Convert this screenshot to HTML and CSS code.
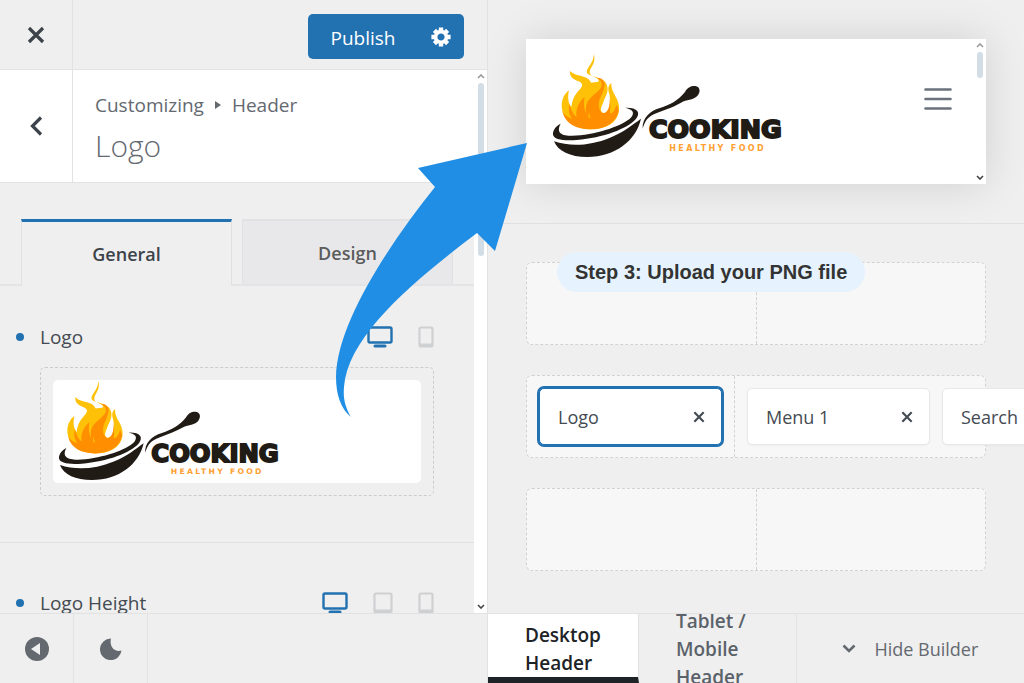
FILE: index.html
```html
<!DOCTYPE html>
<html lang="en">
<head>
    <meta charset="UTF-8">
    <meta name="viewport" content="width=device-width, initial-scale=1.0">
    <title>Customize: Header Logo</title>
    <link rel="stylesheet" href="styles.css">
</head>
<body>
    <svg class="sprite" aria-hidden="true">
        <symbol id="logo" viewBox="0 12 720 312">
            <path fill="#ffc107" d="M132 12C130 45 107 52 111 69C118 80 145 78 163 93C178 110 174 126 164 146C155 165 152 182 160 188C176 182 184 160 178 132C173 118 174 106 184 99C182 128 204 140 207 168C211 208 180 238 122 238C70 238 35 208 35 166C36 146 44 130 57 121C52 145 55 158 64 172C67 146 76 132 90 118C100 106 98 98 84 93C70 88 58 80 60 62C76 82 114 72 123 98C125 110 117 120 118 130C124 118 148 104 146 90C142 80 118 80 119 67C119 52 139 42 132 12Z"/>
            <path fill="#ffc107" d="M90 118L122 98L163 93L160 190L120 225L64 172Z"/>
            <path fill="#ff8f00" d="M38 187C46 222 80 238 122 238C170 238 200 214 206 182C204 174 202 168 199 165C195 180 188 192 180 190C182 170 182 155 177 146C180 175 171 188 158 189C144 180 142 158 156 132C162 120 164 108 160 98C160 116 142 128 128 144C116 160 114 188 122 206C106 196 98 168 104 140C84 158 76 180 80 201C72 196 64 184 59 162C54 178 57 194 66 206C54 202 44 196 38 187Z"/>
            <path fill="#ff8f00" d="M140 84C152 90 158 98 154 110C148 124 124 136 112 156C106 172 106 190 114 202C120 180 120 160 140 140C160 120 174 104 156 88C152 84 146 83 140 84Z"/>
            <path fill="#fff" d="M164 148C156 168 145 184 161 189C174 187 181 168 178 145C174 160 168 160 164 148Z"/>
            <path fill="#211b15" d="M32 221C16 229 8 242 9 254C12 268 38 273 80 270C160 264 232 236 257 208C274 187 262 172 226 173C246 178 254 185 246 199C230 222 160 248 92 256C44 261 14 254 32 221Z"/>
            <path fill="#211b15" d="M12 274C60 290 120 288 180 263C222 246 246 225 273 206C258 272 196 320 112 321C60 321 24 304 12 274Z"/>
            <path fill="#211b15" d="M278 236C276 206 298 183 330 174C360 165 386 150 405 126C412 112 424 107 436 108C451 110 453 127 441 139C428 151 411 148 393 158C366 174 338 181 313 192C291 202 285 214 278 236Z"/>
            <text class="logo-name" x="297" y="264">COOKING</text>
            <text class="logo-tagline" x="358" y="303">HEALTHY FOOD</text>
        </symbol>
        <symbol id="desktop" viewBox="0 0 26 22">
            <rect x="1.5" y="1.5" width="23" height="15" rx="1.5" fill="none" stroke="currentColor" stroke-width="2.4"/>
            <path d="M8 20H18" stroke="currentColor" stroke-width="3" stroke-linecap="round"/>
        </symbol>
        <symbol id="tablet" viewBox="0 0 20 22">
            <rect x="1.5" y="1.5" width="17" height="19" rx="1.5" fill="none" stroke="currentColor" stroke-width="2.2"/>
            <path d="M2 19H18" stroke="currentColor" stroke-width="3"/>
        </symbol>
        <symbol id="phone" viewBox="0 0 16 22">
            <rect x="1.5" y="1.5" width="13" height="19" rx="1.5" fill="none" stroke="currentColor" stroke-width="2.2"/>
            <path d="M2 19H14" stroke="currentColor" stroke-width="3"/>
        </symbol>
        <symbol id="cross" viewBox="0 0 18 18">
            <path d="M2 2L16 16M16 2L2 16" stroke="currentColor" stroke-width="3.2"/>
        </symbol>
        <symbol id="caret" viewBox="0 0 8 5">
            <path d="M1 4L4 1L7 4" fill="none" stroke="currentColor" stroke-width="1.6"/>
        </symbol>
    </svg>

    <div class="customizer">
        <aside class="sidebar">
            <header class="sidebar-header">
                <button class="close-btn" aria-label="Close"><svg width="18" height="18"><use href="#cross"/></svg></button>
                <div class="publish">
                    <button class="publish-btn">Publish</button>
                    <button class="settings-btn" aria-label="Publish settings">
                        <svg width="20" height="20" viewBox="-10 -10 20 20">
                            <g stroke="#fff" stroke-width="4.4">
                                <path d="M0 -9.6V-5M0 9.6V5M-9.6 0H-5M9.6 0H5"/>
                                <path d="M-6.6 -6.6L-4 -4M6.6 -6.6L4 -4M-6.6 6.6L-4 4M6.6 6.6L4 4"/>
                            </g>
                            <circle r="5.4" fill="none" stroke="#fff" stroke-width="3.6"/>
                        </svg>
                    </button>
                </div>
            </header>

            <div class="sidebar-body">
                <div class="panel">
                    <div class="panel-title">
                        <button class="back-btn" aria-label="Back">
                            <svg width="14" height="20" viewBox="0 0 14 20"><path d="M12 1.5L3.5 10L12 18.5" fill="none" stroke="currentColor" stroke-width="3.2"/></svg>
                        </button>
                        <div class="title-text">
                            <div class="crumbs">Customizing <svg width="6" height="8" viewBox="0 0 6 8"><path d="M0 0L6 4L0 8Z" fill="currentColor"/></svg> Header</div>
                            <h1>Logo</h1>
                        </div>
                    </div>

                    <div class="tabs">
                        <button class="tab active">General</button>
                        <button class="tab">Design</button>
                    </div>

                    <section class="control">
                        <div class="control-head">
                            <span class="dot"></span>
                            <h2>Logo</h2>
                            <div class="devices">
                                <button class="device active" aria-label="Desktop"><svg width="26" height="22"><use href="#desktop"/></svg></button>
                                <button class="device" aria-label="Mobile"><svg width="16" height="22"><use href="#phone"/></svg></button>
                            </div>
                        </div>
                        <div class="upload">
                            <div class="upload-image"><svg class="logo-small" role="img" aria-label="Cooking Healthy Food"><use href="#logo"/></svg></div>
                        </div>
                    </section>

                    <section class="control">
                        <div class="control-head">
                            <span class="dot"></span>
                            <h2>Logo Height</h2>
                            <div class="devices">
                                <button class="device active" aria-label="Desktop"><svg width="26" height="22"><use href="#desktop"/></svg></button>
                                <button class="device" aria-label="Tablet"><svg width="20" height="22"><use href="#tablet"/></svg></button>
                                <button class="device" aria-label="Mobile"><svg width="16" height="22"><use href="#phone"/></svg></button>
                            </div>
                        </div>
                    </section>
                </div>
                <div class="scrollbar">
                    <svg class="up" width="8" height="5"><use href="#caret"/></svg>
                    <span class="thumb"></span>
                    <svg class="down" width="8" height="5"><use href="#caret"/></svg>
                </div>
            </div>

            <footer class="sidebar-footer">
                <button class="footer-btn" aria-label="Hide controls">
                    <svg width="24" height="24" viewBox="0 0 24 24"><circle cx="12" cy="12" r="12" fill="currentColor"/><path d="M6 12L15 6V18Z" fill="#efefef"/></svg>
                </button>
                <button class="footer-btn" aria-label="Dark mode">
                    <svg width="22" height="22" viewBox="0 0 22 22"><path d="M11 0.5A10.8 10.8 0 1 0 21.5 12.5C15 14.5 9 9 11 0.5Z" fill="currentColor"/></svg>
                </button>
            </footer>
        </aside>

        <main class="main">
            <div class="preview-area">
                <div class="preview">
                    <svg class="logo-large" role="img" aria-label="Cooking Healthy Food"><use href="#logo"/></svg>
                    <button class="menu-btn" aria-label="Menu">
                        <svg width="28" height="24" viewBox="0 0 28 24"><path d="M1.5 2.5H26.5M1.5 12H26.5M1.5 21.5H26.5" stroke="currentColor" stroke-width="2.6" stroke-linecap="round"/></svg>
                    </button>
                    <div class="scrollbar">
                        <svg class="up" width="8" height="5"><use href="#caret"/></svg>
                        <span class="thumb"></span>
                        <svg class="down" width="8" height="5"><use href="#caret"/></svg>
                    </div>
                </div>
            </div>

            <div class="builder">
                <div class="step">Step 3: Upload your PNG file</div>
                <div class="row">
                    <div class="cell"></div>
                    <div class="cell"></div>
                </div>
                <div class="row">
                    <div class="cell fit">
                        <div class="item selected">Logo <button class="remove" aria-label="Remove Logo"><svg width="12" height="12"><use href="#cross"/></svg></button></div>
                    </div>
                    <div class="cell">
                        <div class="item">Menu 1 <button class="remove" aria-label="Remove Menu 1"><svg width="12" height="12"><use href="#cross"/></svg></button></div>
                        <div class="item">Search</div>
                    </div>
                </div>
                <div class="row">
                    <div class="cell"></div>
                    <div class="cell"></div>
                </div>
            </div>

            <footer class="builder-footer">
                <button class="view-tab active">Desktop<br>Header</button>
                <button class="view-tab">Tablet /<br>Mobile<br>Header</button>
                <button class="hide-btn">
                    <svg width="14" height="10" viewBox="0 0 14 10"><path d="M1.5 1.5L7 7L12.5 1.5" fill="none" stroke="currentColor" stroke-width="2.6"/></svg>
                    Hide Builder
                </button>
            </footer>
        </main>

        <svg class="arrow" width="192" height="275" viewBox="336 143 192 275" aria-hidden="true">
            <path fill="#208ee4" d="M527 143L418 168L435 187C395 237 337 320 336 377C336 395 341 409 351 417C345 407 343 398 344 387C348 335 415 280 477 233L495 251Z"/>
        </svg>
    </div>
</body>
</html>
```
FILE: styles.css
```css
* { box-sizing: border-box; }
body { margin: 0; font-family: 'Open Sans', 'Noto Sans', sans-serif; font-size: 18px; line-height: 28px; color: #444b52; background: #efefef; }
h1, h2 { margin: 0; font-weight: 400; }
button { font: inherit; color: inherit; background: none; border: none; padding: 0; cursor: pointer; }
svg { display: block; flex-shrink: 0; }
.sprite { position: absolute; width: 0; height: 0; }

.customizer { position: relative; display: grid; grid-template-columns: 488px 1fr; height: 100vh; overflow: hidden; }

/* sidebar */
.sidebar { display: flex; flex-direction: column; min-height: 0; border-right: 1px solid #e2e2e3; }
.sidebar-header { display: flex; justify-content: space-between; align-items: center; height: 70px; padding-right: 23px; border-bottom: 1px solid #e2e2e3; }
.close-btn { display: flex; align-items: center; justify-content: center; align-self: stretch; width: 73px; border-right: 1px solid #e2e2e3; color: #3c434a; }
.publish { display: flex; height: 45px; margin-top: 4px; background: #2271b1; border-radius: 5px; color: #fff; }
.publish-btn { width: 110px; padding-top: 2px; font-size: 19px; }
.settings-btn { display: flex; align-items: center; justify-content: center; width: 46px; }

.sidebar-body { flex: 1; display: flex; min-height: 0; }
.panel { flex: 1; overflow: hidden; }
.panel-title { display: flex; height: 113px; background: #fff; border-bottom: 1px solid #e2e2e3; }
.back-btn { display: flex; align-items: center; justify-content: center; width: 73px; border-right: 1px solid #e2e2e3; color: #3c434a; }
.title-text { padding: 21px 22px; color: #646970; }
.crumbs { display: flex; align-items: center; gap: 11px; font-size: 19px; }
.title-text h1 { font-size: 30px; font-weight: 300; line-height: 38px; margin-top: 8px; }

.tabs { display: flex; gap: 10px; padding: 36px 21px 0; border-bottom: 2px solid #e4e4e6; }
.tab { flex: 1; height: 65px; border: 1px solid #e1e1e3; border-top-width: 2px; border-bottom: none; background: #e8e8eb; font-weight: 600; color: #5c5c5c; }
.tab.active { height: 67px; margin-bottom: -2px; border-top: 3px solid #2271b1; background: #efefef; color: #3c434a; }

.control { padding: 37px 40px 46px; border-bottom: 1px solid #e0e0e1; }
.control + .control { padding-top: 46px; }
.control-head { display: flex; align-items: center; }
.dot { width: 8px; height: 8px; margin: 0 16px 0 -24px; border-radius: 50%; background: #2271b1; }
.control h2 { font-size: 19px; }
.devices { display: flex; gap: 25px; margin-left: auto; }
.device { color: #cfd0d2; }
.device.active { color: #2271b1; }
.upload { margin-top: 16px; padding: 12px; border: 1px dashed #ccc; border-radius: 5px; }
.upload-image { height: 103px; background: #fff; border-radius: 5px; padding: 1px 3px; }
.logo-small { width: 231px; height: 100px; }
.logo-large { width: 240px; height: 104px; }
.logo-name { font-family: 'DejaVu Sans', sans-serif; font-weight: 700; font-size: 76px; fill: #211b15; stroke: #211b15; stroke-width: 6px; }
.logo-tagline { font-family: 'DejaVu Sans', sans-serif; font-weight: 700; font-size: 24px; letter-spacing: 7px; fill: #ffa033; }

.scrollbar { display: flex; flex-direction: column; align-items: center; width: 13px; padding: 4px 0; background: #fff; color: #999; }
.scrollbar .thumb { width: 6px; height: 173px; margin-top: 4px; border-radius: 3px; background: #d2dde5; }
.scrollbar .down { margin-top: auto; transform: rotate(180deg); color: #444; }

.sidebar-footer { display: flex; height: 70px; border-top: 1px solid #e2e2e3; color: #646970; }
.footer-btn { display: flex; align-items: center; justify-content: center; width: 74px; border-right: 1px solid #e2e2e3; }

/* preview + header builder */
.main { display: flex; flex-direction: column; min-width: 0; min-height: 0; }
.preview-area { padding: 39px 38px; border-bottom: 1px solid #e0e0e1; overflow: hidden; }
.preview { display: flex; height: 145px; background: #fff; box-shadow: 0 0 40px rgba(0, 0, 0, 0.13); }
.preview .logo-large { margin: 15px auto 0 24px; }
.menu-btn { align-self: flex-start; margin: 48px 21px 0 0; color: #6b727c; }
.preview .thumb { height: 26px; }

.builder { position: relative; flex: 1; display: flex; flex-direction: column; gap: 30px; padding: 38px; overflow: hidden; }
.step { position: absolute; left: 69px; top: 28px; padding: 6px 18px; border-radius: 20px; background: #e6f3fe; color: #333; font: bold 20px/28px 'Liberation Sans', Arial, sans-serif; }
.row { display: flex; height: 83px; border: 1px dashed #d2d2d3; border-radius: 6px; background: #f7f7f7; }
.cell { flex: 1; display: flex; gap: 12px; min-width: 0; padding: 12px; }
.cell + .cell { border-left: 1px dashed #d2d2d3; }
.cell.fit { flex: none; }
.item { flex: none; display: flex; align-items: center; justify-content: space-between; width: 183px; height: 57px; padding: 0 16px 0 18px; border: 1px solid #e8e8e9; border-radius: 5px; background: #fff; box-shadow: 0 1px 2px rgba(0, 0, 0, 0.04); }
.item.selected { border-color: #2271b1; box-shadow: 0 0 0 2px #2271b1; }

.builder-footer { display: flex; height: 70px; border-top: 1px solid #e2e2e3; overflow: hidden; }
.view-tab { display: flex; align-items: center; padding: 0 37px; border-right: 1px solid #e2e2e3; font-size: 19px; font-weight: 600; text-align: left; color: #5b626a; }
.view-tab:nth-child(2) { padding-right: 50px; }
.view-tab.active { background: #fff; border-bottom: 6px solid #1d2327; padding-top: 6px; color: #1d2327; }
.hide-btn { flex: 1; display: flex; align-items: center; justify-content: center; gap: 18px; color: #646970; }

/* pointer from the upload field to the preview */
.arrow { position: absolute; left: 336px; top: 143px; pointer-events: none; }
```
